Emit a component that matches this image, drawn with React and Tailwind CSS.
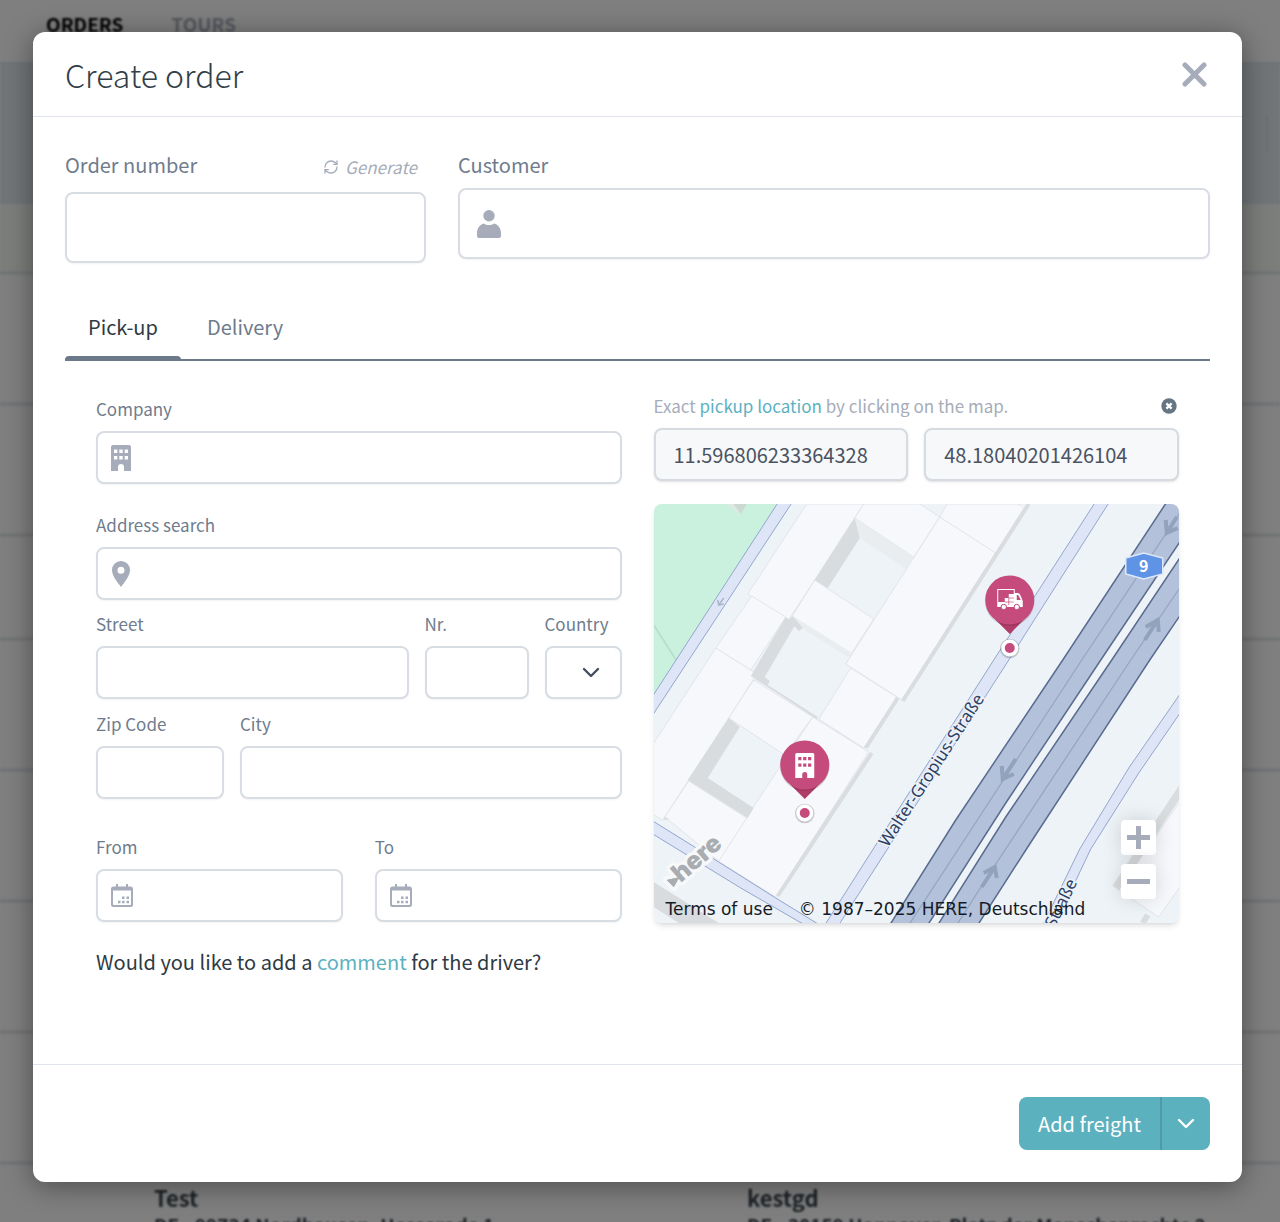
import React from 'react';
import { RefreshCw } from 'lucide-react';

const inputClass =
  'block w-full h-[53px] rounded-lg border-2 border-[#d8dde3] bg-white px-4 text-xl text-[#4a5361] shadow-xs outline-none focus:border-[#5cb1bf]';

function BuildingIcon({ className }) {
  return (
    <svg viewBox="0 0 20 26" className={className} fill="currentColor" aria-hidden="true">
      <path
        fillRule="evenodd"
        d="M2 0h16a2 2 0 0 1 2 2v24h-7v-4a3 3 0 0 0-6 0v4H0V2a2 2 0 0 1 2-2zM3 4.500v3.500h3.300V4.500zM8.300 4.500v3.500h3.400V4.500zM13.700 4.500v3.500H17V4.500zM3 11v3.500h3.300V11zM8.300 11v3.500h3.400V11zM13.700 11v3.500H17V11z"
      />
    </svg>
  );
}

function PinIcon() {
  return (
    <svg viewBox="0 0 18 26" className="w-5 h-[26px]" fill="currentColor" aria-hidden="true">
      <path fillRule="evenodd" d="M9 0a9 9 0 0 1 9 9.300c0 5.500-5.500 12-9 16.700C5.500 21.300 0 14.800 0 9.300A9 9 0 0 1 9 0zm0 5.800a3.500 3.500 0 1 0 0 7 3.500 3.500 0 0 0 0-7z" />
    </svg>
  );
}

function PersonIcon() {
  return (
    <svg viewBox="0 0 24 28" className="w-6 h-7" fill="currentColor" aria-hidden="true">
      <circle cx="12" cy="5.700" r="5.700" />
      <path d="M7 13.500c1.300 1 3.100 1.600 5 1.600s3.700-.6 5-1.600c4.300.9 7 5 7 9.500V26a2 2 0 0 1-2 2H2a2 2 0 0 1-2-2v-3c0-4.500 2.700-8.600 7-9.500z" />
    </svg>
  );
}

function CalendarIcon() {
  return (
    <svg viewBox="0 0 22 23" className="w-[22px] h-[23px]" fill="currentColor" aria-hidden="true">
      <path fillRule="evenodd" d="M5 0h2v2.500h8V0h2v2.500h2.500A2.500 2.500 0 0 1 22 5v15.500a2.500 2.500 0 0 1-2.500 2.500h-17A2.500 2.500 0 0 1 0 20.500V5a2.500 2.500 0 0 1 2.500-2.500H5zM2 6.500v13.800c0 .5.300.8.800.8h16.400c.5 0 .8-.3.800-.8V6.500z" />
      <path d="M11 12.500h2.500V15H11zM15.500 12.500H18V15h-2.500zM7 16.700h2.500v2.500H7zM11 16.700h2.500v2.500H11zM15.500 16.700H18v2.500h-2.500z" />
    </svg>
  );
}

function Chevron({ className }) {
  return (
    <svg viewBox="0 0 18 12" className={className} fill="none" stroke="currentColor" strokeWidth="2.400" strokeLinecap="round" strokeLinejoin="round" aria-hidden="true">
      <path d="M2 2l7 7 7-7" />
    </svg>
  );
}

function Field({ id, label, icon, className = '' }) {
  return (
    <div className={className}>
      <label htmlFor={id} className="block mb-3 text-[17px] leading-5 text-[#6f7c8d]">{label}</label>
      <div className="relative">
        {icon && <span className="absolute inset-y-0 left-[15px] flex items-center text-[#a6acb9]">{icon}</span>}
        <input id={id} type="text" className={icon ? `${inputClass} pl-12` : inputClass} />
      </div>
    </div>
  );
}

function MapMarker({ x, y, children }) {
  return (
    <g transform={`translate(${x} ${y})`}>
      <circle cy="48.500" r="9.800" fill="#000" opacity="0.18" />
      <path d="M-15 19L0 34 15 19z" fill="#b03c6a" />
      <circle cy="1" r="25" fill="#000" opacity="0.12" />
      <circle r="24.500" fill="#c54b7d" />
      <circle cy="48" r="8.500" fill="#fff" />
      <circle cy="48" r="5" fill="#c54b7d" />
      {children}
    </g>
  );
}

function MapDrawing() {
  return (
    <svg
      viewBox="653 504 526 419"
      preserveAspectRatio="xMidYMid slice"
      className="absolute inset-0 w-full h-full"
      role="img"
      aria-label="Map around Walter-Gropius-Straße"
    >
      <rect x="653" y="504" width="526" height="419" fill="#edf3f7" />

      {/* park */}
      <path d="M653 504H777L653 695z" fill="#c9f1de" />
      <path d="M725 504h10l4 10z" fill="#dde9e2" />
      <path d="M733 504h13l-6 10z" fill="#ccd8d3" />
      <path d="M653 625l23 36" stroke="#b9dfcd" strokeWidth="2" />

      {/* buildings */}
      <g fill="#f7f8fc" stroke="#e2e5e9" strokeWidth="1">
        <path d="M806 504L747 594 787 621 814 580 853 519 863 504z" />
        <path d="M863 504H919L939 517 913 557 854 518z" />
        <path d="M814 580L873 619 849 656 791 617z" />
        <path d="M946 504L939 517 845 664 901 700 1026 504z" />
        <path d="M939 517L995 553M1017 504L1024 508" />
        <path d="M751 596L785 617 750 670 715 648z" />
        <path d="M715 648L756 674 728 718 662 820 653 815V743z" />
        <path d="M753 680L812 717 784 755 728 718z" />
        <path d="M850 668L896 697 863 748 818 719z" />
        <path d="M812 717L868 752 775 897 717 861z" />
        <path d="M688 781L746 818 718 861 664 817z" />
        <path d="M1181 799L1118 890 1158 917 1181 884z" />
      </g>
      <path d="M854 518L913 557 906 569 859 538z" fill="#e9edef" />
      <path d="M792 616L850 652 847 657 798 626z" fill="#e9edef" />
      <g fill="#d8dcdf">
        <path d="M854 518L859 538 827 588 814 580z" />
        <path d="M792 616L802 628 798 631 788 620z" />
        <path d="M785 617L795 624 764 677 769 681 767 685 817 717 816 719 750 676z" />
        <path d="M728 718L739 727 707 778 753 808 747 818 687 780z" />
        <path d="M664 817l5 2-6 1z" />
        <path d="M653 882L718 923H678L653 907z" />
      </g>
      <g stroke="#dadddf" strokeWidth="4" fill="none">
        <path d="M1028 504L902 701M897 698L865 748M871 753L777 896" />
        <path d="M1182 787L1115 888" strokeWidth="8" />
        <path d="M1147 915L1142 923" strokeWidth="6" />
      </g>

      {/* side roads */}
      <g fill="#dee5f6" stroke="#93a6cc" strokeWidth="1">
        <path d="M777 503L652 696V715L791 503z" />
        <path d="M652 821L718 862 775 898 819 925H804L740 888 652 834z" />
        <path d="M1094 503L993 660 824 925H838L1008 660 1108 503z" />
        <path d="M1180 693L1128 768 1079 849 1042 925H1054L1090 849 1138 773 1180 712z" />
      </g>

      {/* motorway */}
      <g fill="#b4c1da" stroke="#596b8e" strokeWidth="1.500">
        <path d="M1166 502L1062 660 955 820 889 925H927L1005 803 1100 660 1181 539V502z" />
        <path d="M1181 555L1111 660 1005 817 937 925H977L1027 847 1149 660 1181 613z" />
      </g>
      <path d="M1181 510L1081 660 972 827 908 925M1181 585L1130 660 993 867 956 925" stroke="#95a4bd" strokeWidth="1.200" fill="none" />
      <g stroke="#93a2bc" strokeWidth="4" fill="none">
        <path d="M1176 517L1166 533M1165 520L1166 533 1177 528" />
        <path d="M1144 640L1157 620M1145 627L1157 620 1158 632" />
        <path d="M1015 759L1002 779M1001 766L1002 779 1013 774" />
        <path d="M981 887L994 867M983 873L994 867 996 878" />
        <path d="M723 598L718 605M717 600L718 605 723 604" strokeWidth="1.500" stroke="#a9b6cd" />
      </g>

      {/* road number */}
      <path d="M1125 558L1143 553 1162 558V574L1143 579 1125 574z" fill="#5e93e6" stroke="#dfe9fa" strokeWidth="1.500" />
      <text x="1143" y="572" textAnchor="middle" fontSize="16" fontWeight="600" fill="#fff">9</text>

      <g fill="#2d3f66" stroke="#edf3f7" strokeWidth="3" paintOrder="stroke" fontSize="17" fontFamily="'Noto Sans', sans-serif">
        <text transform="translate(887 848) rotate(-57)">Walter-Gropius-Straße</text>
        <text transform="translate(1054 929) rotate(-64)">Straße</text>
      </g>

      {/* map provider logo */}
      <path d="M666 880L679 877 673 887z" fill="#a9adb2" stroke="#f6f8fa" strokeWidth="8" strokeLinejoin="round" paintOrder="stroke" />
      <text transform="translate(680 883) rotate(-41)" fontFamily="Inter, sans-serif" fontSize="25" fontWeight="900" fill="#a9adb2" stroke="#f6f8fa" strokeWidth="7" strokeLinejoin="round" paintOrder="stroke">here</text>
      <path d="M666 880L679 877 673 887z" fill="#a9adb2" />

      <MapMarker x={1009} y={600}>
        <path fillRule="evenodd" fill="#fff" d="M-12.500-11H5V-7H8Q10-7 11-4L13 1V7H-12.500zM-11.500-10V2H-5V-2H-1V-6H4V-10zM7-5V0H11L9-4Q8.500-5 8-5z" />
        <path d="M-5 2H4M-1-2V5M-1-2H4" stroke="#c54b7d" strokeWidth="0.700" />
        <circle cx="-6" cy="7" r="2.700" fill="#fff" stroke="#c54b7d" />
        <circle cx="7" cy="7" r="2.700" fill="#fff" stroke="#c54b7d" />
      </MapMarker>
      <MapMarker x={804} y={765}>
        <path
          fillRule="evenodd"
          fill="#fff"
          d="M-8-12H8Q9.500-12 9.500-10.500V13H2.500V9.500Q2.500 7 0 7T-2.500 9.500V13H-9.500V-10.500Q-9.500-12-8-12zM-6.500-8V-4.800H-3.300V-8zM-1.600-8V-4.800H1.600V-8zM3.300-8V-4.800H6.500V-8zM-6.500-1.500V1.700H-3.300V-1.500zM-1.600-1.500V1.700H1.600V-1.500zM3.300-1.500V1.700H6.500V-1.500z"
        />
      </MapMarker>
    </svg>
  );
}

function LocationMap() {
  return (
    <div className="relative h-[419px] overflow-hidden rounded-lg shadow-md">
      <MapDrawing />
      <div className="absolute bottom-0 left-3 flex gap-[26px] whitespace-nowrap font-['DejaVu_Sans',sans-serif] text-[17px] leading-7 text-[#151b26]">
        <a href="#terms">Terms of use</a>
        <span>© 1987–2025 HERE, Deutschland</span>
      </div>
      <div className="absolute right-[23px] bottom-6 flex flex-col gap-[9px]">
        {[['Zoom in', 'M6 17.500h23M17.500 6v23'], ['Zoom out', 'M6 17.500h23']].map(([label, d]) => (
          <button key={label} type="button" aria-label={label} className="size-[35px] rounded-sm bg-white text-[#a6acb9] shadow-[0_0_20px_rgba(0,0,0,0.15)]">
            <svg viewBox="0 0 35 35" className="size-full" stroke="currentColor" strokeWidth="5" aria-hidden="true">
              <path d={d} />
            </svg>
          </button>
        ))}
      </div>
    </div>
  );
}

/* Order list behind the dialog */
function OrdersBackdrop() {
  return (
    <div aria-hidden="true" className="absolute inset-0 overflow-hidden">
      <div className="blur-[1px] bg-white">
        <nav className="flex h-[62px] gap-12 bg-white pl-[46px] pt-3 text-[19px] leading-6 font-bold">
          <span className="text-black">ORDERS</span>
          <span className="text-[#a6acb9]">TOURS</span>
        </nav>
        <div className="flex h-[142px] items-center justify-end border-t-2 border-[#dde4ea] bg-[#e3ebf0] pr-3">
          <span className="h-9 w-[2px] bg-[#d3dce2]" />
        </div>
        <div className="h-[71px] border-b-4 border-[#e6e9ee] bg-[#f8fcf7]" />
        <div className="h-[131px] border-b-4 border-[#e6e9ee]" />
        <div className="h-[131px] border-b-4 border-[#e6e9ee]" />
        <div className="h-[104px] border-b-4 border-[#e6e9ee]" />
        <div className="h-[131px] border-b-4 border-[#e6e9ee]" />
        <div className="h-[131px] border-b-4 border-[#e6e9ee]" />
        <div className="h-[131px] border-b-4 border-[#e6e9ee]" />
        <div className="h-[131px] border-b-4 border-[#e6e9ee]" />
        <div className="flex h-[131px] pt-[18px] pl-[154px] text-[22px] leading-7 font-bold text-[#3a444d]">
          <div className="w-[593px] shrink-0">
            <p>Test</p>
            <p className="text-[19px]">DE - 99734 Nordhausen, Hesserode 1</p>
          </div>
          <div className="whitespace-nowrap">
            <p>kestgd</p>
            <p className="text-[19px]">DE - 30159 Hannover, Platz der Menschenrechte 2</p>
          </div>
        </div>
      </div>
      <div className="absolute inset-0 bg-black/50" />
    </div>
  );
}

export default function App() {
  return (
    <div className="relative min-h-screen overflow-hidden font-['Noto_Sans_CJK_SC',sans-serif]">
      <OrdersBackdrop />

      <div className="relative pt-8 pr-[38px] pb-10 pl-[33px]">
        <section role="dialog" aria-labelledby="dialog-title" className="rounded-xl bg-white shadow-[0_4px_28px_rgba(0,0,0,0.4)]">
          <header className="flex h-[85px] items-center justify-between border-b border-[#dfe4ec] px-8">
            <h1 id="dialog-title" className="text-[32px] leading-10 font-light text-[#333e48]">Create order</h1>
            <button type="button" aria-label="Close" className="mr-[3px] text-[#a6acb9]">
              <svg viewBox="0 0 25 25" className="size-[25px]" stroke="currentColor" strokeWidth="5" strokeLinecap="round" aria-hidden="true">
                <path d="M3 3l19 19M22 3L3 22" />
              </svg>
            </button>
          </header>

          <form onSubmit={(e) => e.preventDefault()}>
            <div className="flex items-start gap-8 px-8 pt-[34px]">
              <div className="w-[361px]">
                <div className="mb-[13px] flex items-end justify-between pr-[9px]">
                  <label htmlFor="order-number" className="text-xl leading-7 text-[#6f7c8d]">Order number</label>
                  <button type="button" className="flex items-center gap-[6px] text-[17px] leading-6 text-[#a6acb9] italic">
                    <RefreshCw size={16} />
                    Generate
                  </button>
                </div>
                <input id="order-number" type="text" className="block h-[71px] w-full rounded-lg border-2 border-[#d8dde3] px-4 text-xl shadow-xs" />
              </div>
              <div className="flex-1">
                <label htmlFor="customer" className="mb-[9px] block text-xl leading-7 text-[#6f7c8d]">Customer</label>
                <div className="relative">
                  <span className="absolute inset-y-0 left-[19px] flex items-center text-[#a6acb9]"><PersonIcon /></span>
                  <input id="customer" type="text" className="block h-[71px] w-full rounded-lg border-2 border-[#d8dde3] pr-4 pl-14 text-xl shadow-xs" />
                </div>
              </div>
            </div>

            {/* Tabs */}
            <div className="px-8 pt-[43px]">
              <div role="tablist" className="flex border-b-2 border-[#6b7988] text-xl leading-7">
                <button type="button" role="tab" aria-selected="true" className="relative px-[23px] pt-[7px] pb-[18px] text-[#2f3a44] after:absolute after:inset-x-0 after:-bottom-[2px] after:h-[5px] after:rounded-t after:bg-[#6b7988]">Pick-up</button>
                <button type="button" role="tab" aria-selected="false" className="px-[26px] pt-[7px] pb-[18px] text-[#6f7c8d]">Delivery</button>
              </div>
            </div>

            <div className="grid grid-cols-2 gap-x-8 px-[63px] pt-[35px]">
              <div className="pt-[3px]">
                <Field id="company" label="Company" icon={<BuildingIcon className="w-5 h-[26px]" />} className="mb-[31px]" />
                <Field id="address" label="Address search" icon={<PinIcon />} className="mb-[14px]" />
                <div className="mb-[15px] flex gap-4">
                  <Field id="street" label="Street" className="flex-1" />
                  <Field id="nr" label="Nr." className="w-26" />
                  <div className="w-[77px]">
                    <label htmlFor="country" className="block mb-3 text-[17px] leading-5 text-[#6f7c8d]">Country</label>
                    <div className="relative">
                      <select id="country" className={`${inputClass} appearance-none`} defaultValue="">
                        <option value="" />
                      </select>
                      <Chevron className="pointer-events-none absolute top-[21px] right-[22px] w-[18px] text-[#454d5f]" />
                    </div>
                  </div>
                </div>
                <div className="mb-[38px] flex gap-4">
                  <Field id="zip" label="Zip Code" className="w-32" />
                  <Field id="city" label="City" className="flex-1" />
                </div>
                <div className="grid grid-cols-2 gap-8">
                  <Field id="from" label="From" icon={<CalendarIcon />} />
                  <Field id="to" label="To" icon={<CalendarIcon />} />
                </div>
              </div>

              <div>
                <div className="flex items-center justify-between text-[17px] leading-5 text-[#a6acb9]">
                  <p>Exact <a href="#pickup" className="text-[#5cb1bf]">pickup location</a> by clicking on the map.</p>
                  <button type="button" aria-label="Clear location" className="mr-[2px]">
                    <svg viewBox="0 0 16 16" className="size-4" aria-hidden="true">
                      <circle cx="8" cy="8" r="7.700" fill="#667583" />
                      <path d="M5.400 5.400l5.200 5.200M10.600 5.400l-5.200 5.200" stroke="#fff" strokeWidth="2.200" />
                    </svg>
                  </button>
                </div>
                <div className="mt-3 mb-[23px] grid grid-cols-2 gap-4">
                  {[['Longitude', '11.596806233364328'], ['Latitude', '48.18040201426104']].map(([label, value]) => (
                    <input
                      key={label}
                      type="text"
                      aria-label={label}
                      readOnly
                      value={value}
                      className="block h-[53px] w-full rounded-lg border-2 border-[#d6dbe2] bg-[#f7f8fa] px-[18px] text-xl text-[#4a5361] shadow-sm"
                    />
                  ))}
                </div>
                <LocationMap />
              </div>
            </div>

            <p className="px-[63px] pt-[25px] pb-[88px] text-xl leading-7 text-[#2f3a44]">
              Would you like to add a <a href="#comment" className="text-[#5cb1bf]">comment</a> for the driver?
            </p>

            <footer className="flex justify-end border-t border-[#dfe4ec] px-8 pt-8 pb-8">
              <div className="flex h-[53px] overflow-hidden rounded-lg bg-[#5cb1bf] text-xl leading-7 text-white">
                <button type="submit" className="px-[19px]">Add freight</button>
                <button type="button" aria-label="More options" className="flex w-[50px] items-center justify-center border-l-2 border-[#4f9aa8]">
                  <Chevron className="w-[18px]" />
                </button>
              </div>
            </footer>
          </form>
        </section>
      </div>
    </div>
  );
}
